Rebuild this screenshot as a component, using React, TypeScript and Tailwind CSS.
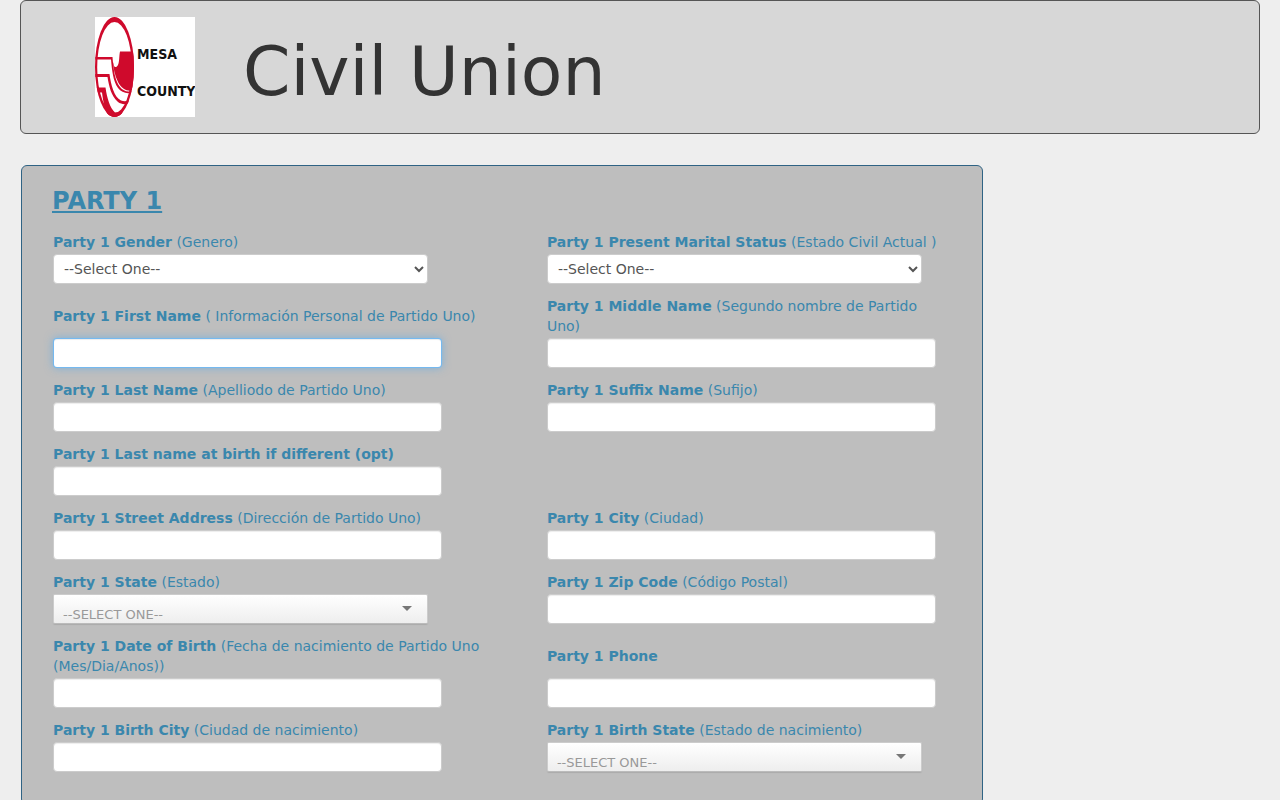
import { useId } from "react";
import clsx from "clsx";

type FieldKind = "text" | "select" | "combo";

type Field = {
  label: string;
  hint?: string;
  kind?: FieldKind;
  focused?: boolean;
  wide?: boolean;
};

const fields: Field[] = [
  { label: "Party 1 Gender", hint: "(Genero)", kind: "select" },
  { label: "Party 1 Present Marital Status", hint: "(Estado Civil Actual )", kind: "select" },
  { label: "Party 1 First Name", hint: "( Información Personal de Partido Uno)", focused: true },
  { label: "Party 1 Middle Name", hint: "(Segundo nombre de Partido Uno)" },
  { label: "Party 1 Last Name", hint: "(Apelliodo de Partido Uno)" },
  { label: "Party 1 Suffix Name", hint: "(Sufijo)" },
  { label: "Party 1 Last name at birth if different (opt)", wide: true },
  { label: "Party 1 Street Address", hint: "(Dirección de Partido Uno)" },
  { label: "Party 1 City", hint: "(Ciudad)" },
  { label: "Party 1 State", hint: "(Estado)", kind: "combo" },
  { label: "Party 1 Zip Code", hint: "(Código Postal)" },
  { label: "Party 1 Date of Birth", hint: "(Fecha de nacimiento de Partido Uno (Mes/Dia/Anos))" },
  { label: "Party 1 Phone" },
  { label: "Party 1 Birth City", hint: "(Ciudad de nacimiento)" },
  { label: "Party 1 Birth State", hint: "(Estado de nacimiento)", kind: "combo" },
];

function Logo() {
  return (
    <svg width="100" height="100" viewBox="0 0 100 100" role="img" aria-label="Mesa County" className="shrink-0 bg-white">
      <defs>
        <clipPath id="seal">
          <ellipse cx="19.5" cy="50" rx="19.5" ry="50" />
        </clipPath>
      </defs>
      <g clipPath="url(#seal)" fill="#cf0a2c">
        <path d="M25 34.500H40V72C35 76 27 73 23 65C19.500 58 18.500 51 17.500 43L19 49C20 51 22 50 23 48C24.500 45 24 39 25 34.500Z" />
        <path d="M0 40H17.500C18.500 53 20 64 25 70C29 75 35 76 40 72V74C34 78 27 76 23 71C18 64 17 53 16 42.500H0Z" />
        <path d="M0 57H14.500C16 68 19 80 26 83.500C30 85 34 84 38 81V84C33 88 27 88 23 85C16 79 14 69 12.500 60H0Z" />
        <path d="M0 70.500H10.500C12 81 15 91 20 95.500H28V100H14C10 94 8 84 7 75.500H0Z" />
      </g>
      {/* ring is heavier at the top and bottom than on the sides */}
      <path
        fill="#cf0a2c"
        fillRule="evenodd"
        d="M19.500 0A19.500 50 0 1 1 19.500 100A19.500 50 0 1 1 19.500 0ZM19.500 5A17.300 45.500 0 1 0 19.500 96A17.300 45.500 0 1 0 19.500 5Z"
      />
      <g fill="#111" className="font-['DejaVu_Sans_Condensed','DejaVu_Sans',sans-serif] text-[14px] font-bold">
        <text x="42" y="42">MESA</text>
        <text x="42" y="79">COUNTY</text>
      </g>
    </svg>
  );
}

function FormField({ label, hint, kind = "text", focused, wide }: Field) {
  const id = useId();

  return (
    <div className={clsx("flex flex-col gap-0.5", wide && "col-span-2")}>
      <label htmlFor={id} className="flex grow items-center">
        <span>
          <strong>{label}</strong> {hint}
        </span>
      </label>

      {kind === "text" && (
        <input
          id={id}
          type="text"
          autoFocus={focused}
          className="h-[30px] w-full max-w-[389px] rounded border border-[#ccc] bg-white px-1.5 text-[#555] shadow-[inset_0_1px_1px_rgba(0,0,0,0.075)] outline-none focus:border-[#52a8ec]/80 focus:shadow-[inset_0_1px_1px_rgba(0,0,0,0.075),0_0_8px_rgba(82,168,236,0.6)]"
        />
      )}

      {kind === "select" && (
        <select id={id} className="h-[30px] w-full max-w-[375px] rounded border border-[#ccc] bg-white px-1.5 text-[#555]">
          <option>--Select One--</option>
        </select>
      )}

      {kind === "combo" && (
        <div className="relative w-full max-w-[375px]">
          <select
            id={id}
            className="block h-[30px] w-full appearance-none rounded-xs border border-[#ccc] border-b-[#bbb] bg-linear-to-b from-white to-[#eee] px-[9px] pt-2.5 text-[13px] text-[#999] shadow-[0_1px_1px_rgba(0,0,0,0.1)]">
            <option>--SELECT ONE--</option>
          </select>
          <svg width="10" height="5" viewBox="0 0 10 5" className="pointer-events-none absolute top-3 right-4">
            <path d="M0 0H10L5 5Z" fill="#777" />
          </svg>
        </div>
      )}
    </div>
  );
}

export default function App() {
  return (
    <div className="min-h-screen bg-[#eee] font-['DejaVu_Sans',sans-serif] text-[14px] leading-5">
      <div className="px-5">
        <header className="flex items-center gap-12 rounded-md border border-[#555] bg-[#d7d7d7] py-4 pl-[74px]">
          <Logo />
          <h1 className="pt-2.5 text-[68px] leading-[80px] text-[#333]">Civil Union</h1>
        </header>
      </div>

      <main className="px-[21px] pt-[31px]">
        <form className="max-w-[962px] rounded-md border border-[#2f6384] bg-[#bebebe] px-[30px] pt-[15px] pb-8 text-[#3a87ad]">
          <h2 className="text-[24px] leading-10 font-bold underline">PARTY 1</h2>
          <div className="grid grid-cols-[11fr_9fr] gap-y-3 px-px pt-[11px]">
            {fields.map((field) => (
              <FormField key={field.label} {...field} />
            ))}
          </div>
        </form>
      </main>
    </div>
  );
}
